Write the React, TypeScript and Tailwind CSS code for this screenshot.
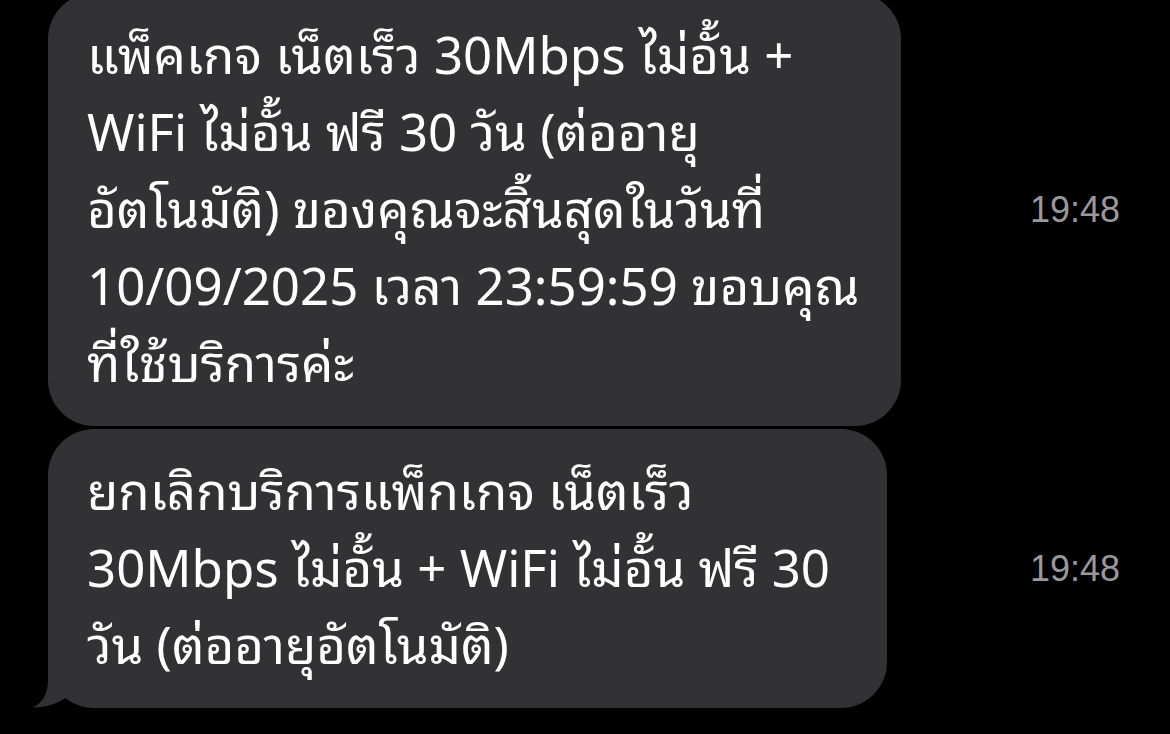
const messages = [
  {
    id: 1,
    width: 'w-[853px]',
    lines: [
      'แพ็คเกจ เน็ตเร็ว 30Mbps ไม่อั้น +',
      'WiFi ไม่อั้น ฟรี 30 วัน (ต่ออายุ',
      'อัตโนมัติ) ของคุณจะสิ้นสุดในวันที่',
      '10/09/2025 เวลา 23:59:59 ขอบคุณ',
      'ที่ใช้บริการค่ะ',
    ],
    time: '19:48',
    tail: false,
  },
  {
    id: 2,
    width: 'w-[839px]',
    lines: [
      'ยกเลิกบริการแพ็กเกจ เน็ตเร็ว',
      '30Mbps ไม่อั้น + WiFi ไม่อั้น ฟรี 30',
      'วัน (ต่ออายุอัตโนมัติ)',
    ],
    time: '19:48',
    tail: true,
  },
];

const Tail = () => (
  <svg
    className="absolute left-[-16px] bottom-0"
    width="60"
    height="50"
    viewBox="0 0 60 50"
  >
    <path
      d="M16 0 L16 23 C16 36 10 46 0 49.5 C12 50 25 46 35 39 L50 20 L40 0 Z"
      fill="#323234"
    />
  </svg>
);

export default function App() {
  return (
    <div
      className="h-[734px] w-[1170px] overflow-hidden bg-black"
      style={{
        fontFamily:
          '"Noto Sans Thai Looped", "Noto Looped Thai", "Noto Sans Thai", "Noto Sans", "Liberation Sans", sans-serif',
      }}
    >
      <div className="-mt-[7px] flex flex-col gap-[3px]">
        {messages.map((m) => (
          <div key={m.id} className="flex items-center">
            <div
              className={`relative ml-[48px] ${m.width} rounded-[46px] bg-[#323234] pl-[39px] pr-[20px] pt-[20px] pb-[28px] text-[51px] leading-[77px] text-white`}
            >
              {m.tail && <Tail />}
              {m.lines.map((line, i) => (
                <div key={i} className="relative whitespace-nowrap">
                  {line}
                </div>
              ))}
            </div>
            <div
              className="ml-auto pr-[50px] text-[36px] text-[#98989e]"
              style={{ fontFamily: '"Liberation Sans", Arial, sans-serif' }}
            >
              {m.time}
            </div>
          </div>
        ))}
      </div>
    </div>
  );
}
